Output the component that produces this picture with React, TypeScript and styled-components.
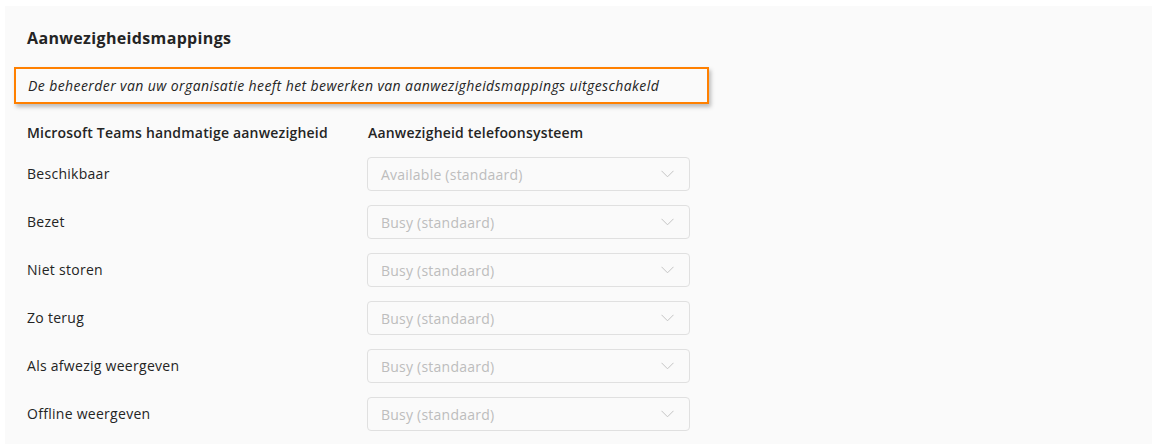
import styled, { createGlobalStyle } from 'styled-components';

const GlobalStyle = createGlobalStyle`
  body {
    margin: 0;
    background: #ffffff;
    font-family: "Open Sans", "Noto Sans", sans-serif;
    color: #242424;
  }
`;

const Panel = styled.div`
  margin: 6px 1px 0 5px;
  height: 438px;
  box-sizing: border-box;
  background: #fafafa;
  padding: 21px 22px 0;
`;

const Title = styled.h2`
  margin: 0;
  font-size: 16px;
  line-height: 22px;
  font-weight: 700;
  letter-spacing: 0.35px;
`;

const Notice = styled.div`
  margin: 18px 0 0 -13px;
  width: 695px;
  height: 37px;
  box-sizing: border-box;
  border: 2px solid #ff8000;
  box-shadow: 2px 3px 4px rgba(0, 0, 0, 0.25);
  padding-left: 12px;
  display: flex;
  align-items: center;
  font-size: 14px;
  font-style: italic;
  letter-spacing: 0.41px;
`;

const Grid = styled.div`
  display: grid;
  grid-template-columns: 340px 323px;
  row-gap: 14px;
  margin-top: 19px;
  align-items: center;
`;

const Header = styled.div`
  font-size: 14px;
  line-height: 20px;
  font-weight: 600;
  letter-spacing: 0.19px;
  padding-left: ${p => (p.$offset ? '1px' : '0')};
`;

const Label = styled.div`
  font-size: 14px;
  line-height: 20px;
  letter-spacing: 0.28px;
`;

const Select = styled.div`
  height: 34px;
  box-sizing: border-box;
  border: 1px solid #e0e0e0;
  border-radius: 4px;
  display: flex;
  align-items: center;
  justify-content: space-between;
  padding: 0 15px 0 13px;
  font-size: 14px;
  color: #bdbdbd;
  letter-spacing: 0.23px;
`;

const Chevron = () => (
  <svg width="13" height="8" viewBox="0 0 13 8" fill="none">
    <path d="M0.5 0.8 L6.5 6.8 L12.5 0.8" stroke="#c4c4c4" strokeWidth="1" />
  </svg>
);

const rows = [
  ['Beschikbaar', 'Available (standaard)'],
  ['Bezet', 'Busy (standaard)'],
  ['Niet storen', 'Busy (standaard)'],
  ['Zo terug', 'Busy (standaard)'],
  ['Als afwezig weergeven', 'Busy (standaard)'],
  ['Offline weergeven', 'Busy (standaard)'],
];

export default function App() {
  return (
    <>
      <GlobalStyle />
      <Panel>
        <Title>Aanwezigheidsmappings</Title>
        <Notice>De beheerder van uw organisatie heeft het bewerken van aanwezigheidsmappings uitgeschakeld</Notice>
        <Grid>
          <Header>Microsoft Teams handmatige aanwezigheid</Header>
          <Header $offset>Aanwezigheid telefoonsysteem</Header>
          {rows.map(([label, value]) => (
            <>
              <Label key={label}>{label}</Label>
              <Select key={label + '-s'}>
                {value}
                <Chevron />
              </Select>
            </>
          ))}
        </Grid>
      </Panel>
    </>
  );
}
